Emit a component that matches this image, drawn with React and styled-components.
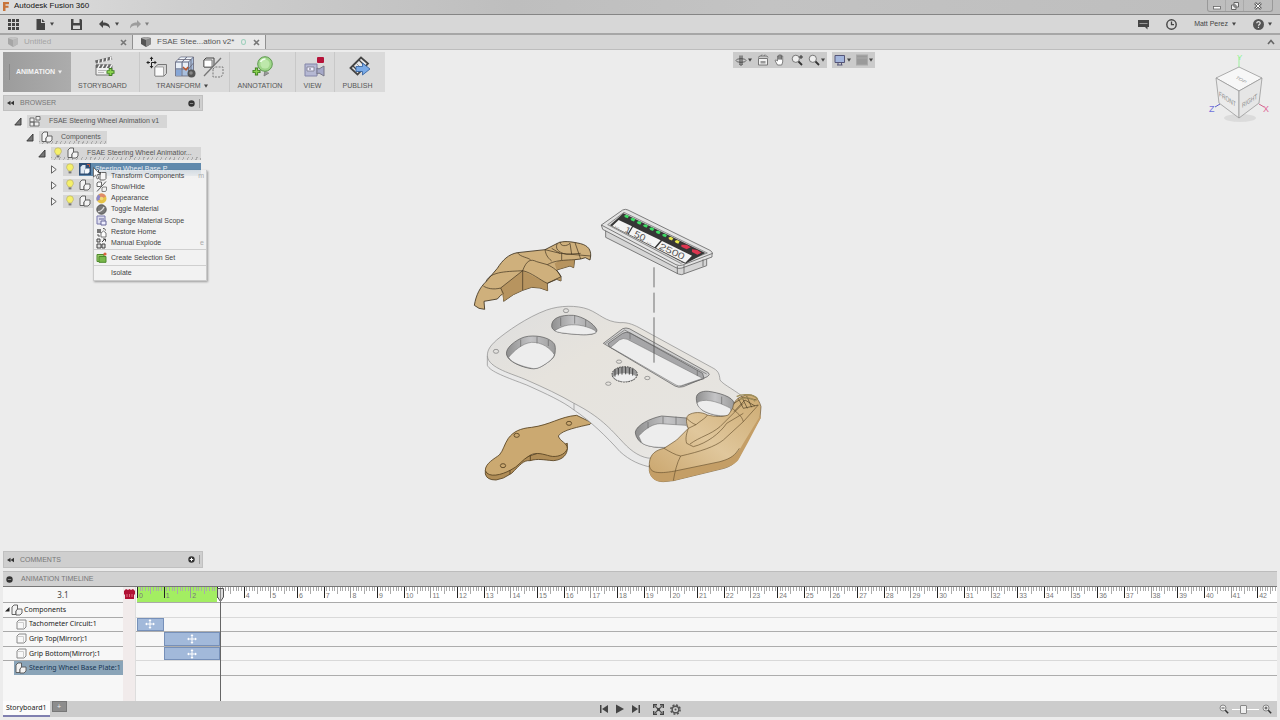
import React, { useState } from 'react';
import styled, { createGlobalStyle } from 'styled-components';

const GlobalStyle = createGlobalStyle`
  * {
    box-sizing: border-box;
  }
  body {
    margin: 0;
    background: #ececec;
    font-family: 'Liberation Sans', Arial, sans-serif;
    font-size: 7px;
    line-height: 10px;
    color: #444;
  }
  button,
  input {
    margin: 0;
    padding: 0;
    border: 0;
    background: none;
    font: inherit;
    color: inherit;
  }
  ul {
    margin: 0;
    padding: 0;
    list-style: none;
  }
  svg {
    display: block;
    flex: none;
  }
`;

const Page = styled.div`
  display: flex;
  flex-direction: column;
  min-height: 100vh;
`;

/* ---------- window chrome ---------- */

const TitleBar = styled.header`
  display: flex;
  align-items: center;
  height: 15px;
  padding: 0 7px 2px 2px;
  gap: 4px;
  background: linear-gradient(to right, #dedede, #cfcfcf 14%, #bebebe 40%, #c3c3c3 60%, #bdbdbd);
  border-bottom: 1px solid #858585;
`;

const AppTitle = styled.h1`
  margin: 0;
  flex: 1;
  font-size: 8px;
  font-weight: 400;
  color: #111;
`;

const WindowButtons = styled.div`
  display: flex;
  align-self: flex-start;
  height: 12px;
  border: 1px solid #999;
  border-top: 0;
  border-radius: 0 0 3px 3px;
`;

const WindowButton = styled.button`
  display: flex;
  align-items: center;
  justify-content: center;
  width: ${(props) => (props.$wide ? '28px' : '18px')};
  border-right: 1px solid #aaa;

  &:last-child {
    border-right: 0;
  }
`;

const QuickBar = styled.div`
  display: flex;
  align-items: center;
  height: 20px;
  padding: 0 8px;
  background: #d7d7d7;
  border-bottom: 2px solid #a6a6a6;
`;

const QuickGroup = styled.div`
  display: flex;
  align-items: center;
  gap: ${(props) => props.$gap};
  margin-left: ${(props) => (props.$end ? 'auto' : '0')};
`;

const IconButton = styled.button`
  display: flex;
  align-items: center;
  gap: ${(props) => (props.$tight ? '1px' : '4px')};
  opacity: ${(props) => (props.$faded ? 0.6 : 1)};
`;

const TabBar = styled.nav`
  display: flex;
  align-items: center;
  height: 15px;
  padding-right: 5px;
  background: #d5d5d5;
  border-bottom: 1px solid #bdbdbd;
`;

const DocTab = styled.div`
  display: flex;
  align-items: center;
  align-self: stretch;
  width: 133px;
  padding: 0 5px 0 7px;
  font-size: 8px;
  color: ${(props) => (props.$active ? '#555' : '#a5a5a5')};
  background: ${(props) => (props.$active ? '#e8e8e8' : '#d3d3d3')};
  border-right: 1px solid #909090;
`;

const DocName = styled.button`
  display: flex;
  align-items: center;
  gap: 5px;
  white-space: nowrap;
`;

const SyncRing = styled.span`
  width: 5px;
  height: 6px;
  margin-left: 7px;
  border: 1px solid #9fd0bd;
  border-radius: 50%;
`;

const CloseButton = styled.button`
  margin-left: auto;
`;

/* ---------- workspace ---------- */

const Workspace = styled.main`
  position: relative;
  display: flex;
  flex: 1;
  flex-direction: column;
  padding: 2px 3px 3px;
  background: #ececec;
`;

const ModelView = styled.svg`
  position: absolute;
  inset: 0;
  width: 100%;
  height: 100%;
`;

const TopRow = styled.div`
  position: relative;
  display: flex;
  align-items: flex-start;
  height: 43px;
`;

const Ribbon = styled.div`
  display: flex;
  height: 40px;
`;

const WorkspaceButton = styled.button`
  display: flex;
  align-items: center;
  gap: 3px;
  width: 68px;
  padding-left: 6px;
  background: linear-gradient(to right, #9c9c9c, #acacac);
  color: #f4f4f4;
  font-weight: 700;

  &::before {
    content: '';
    width: 1px;
    height: 16px;
    margin-right: 3px;
    background: #888;
  }
`;

const RibbonGroup = styled.div`
  display: flex;
  flex-direction: column;
  align-items: center;
  width: ${(props) => props.$width};
  padding: 4px 6px 0 0;
  background: #dadada;
  border-right: 1px solid #c8c8c8;

  &:last-child {
    border-right: 0;
  }
`;

const RibbonIcons = styled.div`
  display: flex;
  gap: 6px;
  height: 25px;
  padding-left: 6px;
`;

const RibbonLabel = styled.button`
  display: flex;
  align-items: center;
  gap: 3px;
  padding-left: 1px;
  color: #555;
`;

const NavBar = styled.div`
  display: flex;
  gap: 5px;
  margin: 0 auto;
  padding-left: 14px;
`;

const NavGroup = styled.div`
  display: flex;
  align-items: center;
  gap: 5px;
  height: 16px;
  padding: 0 2px;
  background: #cbcbcb;
`;

const CubeArea = styled.div`
  padding: 2px 5px 0 0;
`;

const PanelHeader = styled.button`
  position: relative;
  display: flex;
  align-items: center;
  gap: 6px;
  width: 200px;
  height: ${(props) => (props.$tall ? '17px' : '16px')};
  padding: 0 2px 0 3px;
  background: #cfcfcf;
  border: 1px solid #c0c0c0;
  color: #777;
`;

const PanelTools = styled.span`
  display: flex;
  align-items: center;
  gap: 4px;
  margin-left: auto;

  &::after {
    content: '';
    width: 1px;
    height: 9px;
    background: #999;
  }
`;

const Tree = styled.ul`
  position: relative;
  padding-top: 2px;
`;

const TreeRow = styled.li`
  display: flex;
  align-items: center;
  height: 16px;
  padding-left: ${(props) => props.$depth * 12 + 11}px;
  gap: 5px;
`;

const hatch = 'repeating-linear-gradient(115deg, #aaa 0 1px, #d6d6d6 1px 4px) bottom / 100% 3px no-repeat, #d6d6d6';

const TreeBody = styled.span`
  display: flex;
  align-items: center;
  gap: 4px;
  height: 13px;
  width: ${(props) => props.$width};
  padding-left: 2px;
  background: ${(props) => (props.$hatched ? hatch : '#d6d6d6')};
  color: #555;
  white-space: nowrap;
`;

const TreeLabel = styled.span`
  display: flex;
  flex: 1;
  align-items: center;
  align-self: stretch;
  gap: 4px;
  padding-left: ${(props) => (props.$selected ? '0' : '4px')};
  overflow: hidden;
  background: ${(props) => (props.$selected ? '#6089ac' : 'none')};
  color: ${(props) => (props.$selected ? '#e8eef4' : 'inherit')};
`;

const Menu = styled.div`
  position: absolute;
  top: 120px;
  left: 93px;
  width: 114px;
  padding-bottom: 1px;
  background: linear-gradient(rgba(240, 240, 240, 0.8), #f2f2f2 10px);
  border: 1px solid #cacaca;
  border-top: 0;
  box-shadow: 1px 1px 2px rgba(0, 0, 0, 0.35);
`;

const MenuGroup = styled.div`
  display: grid;
  grid-auto-rows: 1fr;
  height: ${(props) => props.$height};
  border-top: ${(props) => (props.$first ? '0' : '1px solid #cfcfcf')};
`;

const MenuItem = styled.button`
  display: flex;
  align-items: center;
  gap: 4px;
  padding: 0 2px;
  color: #444;
  text-align: left;

  &:hover {
    background: #dfe7ef;
  }
`;

const MenuIcon = styled.span`
  width: 11px;
`;

const Shortcut = styled.span`
  margin-left: auto;
  color: #aaa;
`;

const Cursor = styled.svg`
  position: absolute;
  top: 117px;
  left: 93px;
`;

const Spacer = styled.div`
  flex: 1;
`;

/* ---------- timeline ---------- */

const Timeline = styled.section`
  margin: 0 3px;
  background: #f7f7f7;
`;

const TimelineTitle = styled.button`
  display: flex;
  align-items: center;
  gap: 8px;
  width: 100%;
  height: 16px;
  padding: 0 3px;
  background: #d1d1d1;
  border-top: 1px solid #bcbcbc;
  border-bottom: 1px solid #777;
  color: #777;
`;

const TimelineBody = styled.div`
  display: grid;
  grid-template-columns: 120px 13px 1fr;
  grid-template-rows: 16px 73px 25px;
  position: relative;
`;

const TimeReadout = styled.output`
  padding-top: 3px;
  border-bottom: 1px solid #aaa;
  text-align: center;
  font: 8px/10px 'Noto Sans', sans-serif;
`;

const KeyColumn = styled.div`
  grid-row: 1 / 4;
  grid-column: 2;
  padding: 1px;
  background: #f1ebeb;
  border-right: 1px solid #ddd;
`;

const NameList = styled.ul`
  display: grid;
  grid-template-rows: repeat(5, minmax(0, 1fr));
`;

const NameRow = styled.li`
  display: flex;
  align-items: stretch;
  padding-left: ${(props) => (props.$root ? '0' : '11px')};
  border-bottom: 1px solid ${(props) => (props.$selected ? 'transparent' : '#aaa')};
  font-family: 'Noto Sans', sans-serif;
  color: #222;
  white-space: nowrap;
`;

const NameCell = styled.span`
  display: flex;
  flex: 1;
  align-items: center;
  gap: ${(props) => (props.$root ? '1px' : '2px')};
  padding-left: ${(props) => (props.$selected ? '1px' : '2px')};
  background: ${(props) => (props.$selected ? '#8aa4b8' : 'none')};
  color: ${(props) => (props.$selected ? '#173553' : 'inherit')};
`;

const Ruler = styled.div`
  grid-row: 1;
  grid-column: 3;
  display: flex;
  margin-left: 1px;
  overflow: hidden;
  background: #fff;
  border-bottom: 1px solid #aaa;
`;

const Second = styled.div`
  position: relative;
  display: flex;
  flex: ${(props) => props.$share} 1 0;
  min-width: 0;
  background: ${(props) => (props.$played ? '#a3ee62' : '#fff')};
`;

const Tick = styled.i`
  flex: 1;
  height: ${(props) => props.$height};
  box-shadow: inset 1px 0 ${(props) => props.$color};
`;

const SecondLabel = styled.span`
  position: absolute;
  bottom: 2px;
  left: 2px;
  color: #777;
  line-height: 8px;
`;

const Tracks = styled.div`
  grid-row: 2;
  grid-column: 3;
  display: grid;
  grid-template-rows: repeat(5, minmax(0, 1fr));
`;

const Track = styled.div`
  display: flex;
  padding-left: 1px;
  border-bottom: 1px solid ${(props) => (props.$soft ? '#d9d9d9' : '#adadad')};
`;

const Gap = styled.div`
  flex: ${(props) => props.$share} 1 0;
`;

const Clip = styled.div`
  display: flex;
  align-items: center;
  justify-content: center;
  flex: ${(props) => props.$share} 1 0;
  min-width: 0;
  background: #a2b9da;
  box-shadow: inset 0 0 0 1px #7690b9;
`;

const PlayheadLayer = styled.div`
  position: absolute;
  top: 1px;
  bottom: 0;
  left: 134px;
  right: 0;
  display: flex;
  pointer-events: none;
`;

const Playhead = styled.div`
  width: 7px;
  margin: 0 -4px 0 -3px;

  &::after {
    content: '';
    display: block;
    width: 1px;
    height: 99px;
    margin-left: 3px;
    background: #666;
  }
`;

const BottomBar = styled.footer`
  display: grid;
  grid-template-columns: 1fr auto 1fr;
  align-items: center;
  height: 16px;
  margin: 0 3px 3px;
  background: #cccccc;
`;

const StoryTabs = styled.div`
  display: flex;
  align-self: stretch;
  gap: 2px;
`;

const StoryTab = styled.button`
  padding: 0 3px;
  background: #fbfbfb;
  border-bottom: 2px solid #8080b0;
  font-family: 'Noto Sans', sans-serif;
  color: #222;
`;

const AddTab = styled.button`
  width: 15px;
  height: 11px;
  background: #8d8d8d;
  border: 1px solid #777;
  color: #eee;
  line-height: 8px;
`;

const Playback = styled.div`
  display: flex;
  gap: 6px;
`;

const ZoomTools = styled.div`
  display: flex;
  align-items: center;
  justify-content: flex-end;
  gap: 3px;
  padding-right: 5px;
`;

const ZoomSlider = styled.input`
  width: 27px;
  height: 12px;
  appearance: none;

  &::-webkit-slider-runnable-track {
    height: 1px;
    background: #fff;
  }
  &::-webkit-slider-thumb {
    appearance: none;
    width: 7px;
    height: 9px;
    margin-top: -4px;
    background: #eee;
    border: 1px solid #888;
    border-radius: 1px;
  }
`;

/* ---------- icons ---------- */

const Icon = ({ w = 12, h = 12, box, children, ...rest }) => (
  <svg width={w} height={h} viewBox={box || `0 0 ${w} ${h}`} fill="none" aria-hidden="true" {...rest}>
    {children}
  </svg>
);

const Caret = ({ color = '#444' }) => (
  <Icon w={4} h={4}>
    <path d="M0 .5h4L2 3.8z" fill={color} />
  </Icon>
);

const Close = () => (
  <Icon w={7} h={7}>
    <path d="M1 1l5 5M6 1L1 6" stroke="#777" strokeWidth="1.6" />
  </Icon>
);

const DocCube = ({ faded }) => (
  <Icon w={12} h={12} opacity={faded ? 0.35 : 1}>
    <path d="M1 2l5-1 5 1v6l-5 3-5-3z" fill="#555" />
    <path d="M6 4l5-2v6l-5 3z" fill="#888" />
    <path d="M1 2l5-1 5 1-5 2z" fill="#aaa" />
  </Icon>
);

const Rewind = () => (
  <Icon w={7} h={6}>
    <path d="M3.5 .8v4.4L0 3zM7 .8v4.4L3.5 3z" fill="#333" />
  </Icon>
);

const Dot = ({ plus }) => (
  <Icon w={7} h={7}>
    <circle cx="3.5" cy="3.5" r="3.2" fill="#333" />
    <path d={plus ? 'M1.8 3.5h3.4M3.5 1.8v3.4' : 'M1.8 3.5h3.4'} stroke={plus ? '#fff' : '#888'} />
  </Icon>
);

const Bulb = () => (
  <Icon w={10} h={12}>
    <path d="M5 .8a3.4 3.4 0 0 1 3.4 3.4C8.400 6 6.800 6.500 6.700 8H3.300C3.200 6.500 1.600 6 1.600 4.200A3.400 3.400 0 0 1 5 .8z" fill="#f5f06a" stroke="#b9b06a" strokeWidth=".7" />
    <path d="M3.600 8.400h2.800v2H3.600z" fill="#777" />
  </Icon>
);

const Parts = ({ tint = '#f4f4f4' }) => (
  <Icon w={12} h={12}>
    <path d="M1 3l2-2h3.500v5L5 7.500v3H1z" fill={tint} stroke="#555" strokeWidth=".9" />
    <path d="M5 7l1.500-2H11v4l-2 2H5z" fill={tint} stroke="#555" strokeWidth=".9" />
  </Icon>
);

const ActivePart = () => (
  <Icon w={12} h={12}>
    <path d="M0 0h12v12H0z" fill="#2f4f74" />
    <path d="M1.500 4l2-2h3v4l-1.500 1.500v3H1.500z" fill="#dfe8f2" />
    <path d="M5.500 7L7 5.500h3.500v3.500l-1.500 1.500H5.500z" fill="#f6f9fc" />
    <path d="M8 1.500h2.500V4" stroke="#c0563c" />
  </Icon>
);

const Box = () => (
  <Icon w={11} h={11}>
    <path d="M1 3l2-2h7v7l-2 2H1z" fill="#f8f8f8" stroke="#888" />
    <path d="M1.500 3.500h6v6" stroke="#ccc" />
  </Icon>
);

const Assembly = () => (
  <Icon w={12} h={12}>
    <path d="M1 3h4v4H1zM1 7h4v4H1zM5 7h5v4H5zM7 1.500h4V5H7z" fill="#eee" stroke="#666" strokeWidth=".9" />
  </Icon>
);

const Expander = ({ open }) => (
  <Icon w={8} h={9}>
    {open ? (
      <path d="M7 1v7H.8z" fill="#777" stroke="#333" strokeWidth=".9" />
    ) : (
      <path d="M1.500 .8v7.400l4.700-3.700z" fill="#f4f4f4" stroke="#555" strokeWidth=".9" />
    )}
  </Icon>
);

const Move = ({ size = 10, color = '#fff' }) => (
  <Icon w={size} h={size} box="0 0 10 10">
    <path d="M5 1v8M1 5h8" stroke={color} />
    <path d="M3.500 2L5 0l1.500 2zM3.500 8L5 10l1.500-2zM2 3.500L0 5l2 1.500zM8 3.500L10 5 8 6.500z" fill={color} />
  </Icon>
);

const StoryboardIcon = () => (
  <Icon w={22} h={22}>
    <path d="M2 9h16v10H2z" fill="#f0f0f0" stroke="#777" />
    <path d="M2 8.500h16v3.500H2z" fill="#666" />
    <path d="M4 12l2-3.500M8 12l2-3.500M12 12l2-3.500M16 12l2-3.500" stroke="#f4f4f4" strokeWidth="1.500" />
    <path d="M1 4.500L17.500 .5l.8 3L2 7.500z" fill="#666" />
    <path d="M4.500 7l.5-3.500M8.500 6L9 2.500M12.500 5l.5-3.500M16.500 4l.3-3" stroke="#f4f4f4" strokeWidth="1.500" />
    <path d="M4 14.500h8M4 16.500h6" stroke="#bbb" />
    <path d="M16.500 12v8M12.500 16h8" stroke="#3e7e22" strokeWidth="3.600" />
    <path d="M16.500 13v6M13.500 16h6" stroke="#8ad14f" strokeWidth="1.800" />
  </Icon>
);

const TransformIcon = () => (
  <Icon w={22} h={22}>
    <path d="M9 11l3-2.500h8.500v9L18 20H9z" fill="#d5d5d5" stroke="#777" />
    <path d="M9 11h8.500v9H9z" fill="#fafafa" stroke="#888" strokeWidth=".7" />
    <path d="M5.500 2v9M1 6.500h9" stroke="#222" strokeDasharray="3 1.500 4" />
    <path d="M3.700 3l1.800-2.400L7.300 3zM3.700 10l1.800 2.400L7.300 10zM2.500 4.700L.2 6.500l2.300 1.800zM8.500 4.700l2.300 1.800-2.300 1.800z" fill="#222" />
  </Icon>
);

const ExplodeIcon = () => (
  <Icon w={22} h={22}>
    <path d="M1.500 6l5-5h13v13l-5 6h-13z" fill="#a9bfdd" stroke="#667" strokeWidth=".8" />
    <path d="M2 6.500h5.500V12H2zM9 6.500h5V12H9z" fill="#e9eff7" />
    <path d="M2.500 5.500l4.200-4h5l-4 4zM9 5.500l4-4h5.500l-4 4z" fill="#f4f6fa" />
    <path d="M2 14h5.500v5.500H2z" fill="#86a6d6" />
    <path d="M1.500 6h13v14M14.500 6l5-5M8 6v14M1.500 13h13M8 6l5-5M14.500 13l5-6M4 3.500h13v13" stroke="#667" strokeWidth=".8" />
    <path d="M9 11l3 3 2-3" stroke="#c0562a" strokeWidth="1.400" />
    <circle cx="17.500" cy="17.500" r="4" fill="#555" />
    <circle cx="17" cy="17" r="1.800" fill="#888" />
  </Icon>
);

const ShowHideIcon = ({ size = 22 }) => (
  <Icon w={size} h={size} box="0 0 22 22">
    <path d="M2 4l2-2h8v7l-2 2H2z" fill="#ddd" stroke="#444" />
    <path d="M2 4h8v7H2z" fill="#fff" stroke="#555" strokeWidth=".8" />
    <path d="M19 2L2 20" stroke="#777" strokeWidth="1.300" />
    <path d="M11 13l2-2h8v7l-2 3h-8z" stroke="#777" strokeDasharray="2 1.200" />
  </Icon>
);

const AnnotationIcon = () => (
  <Icon w={22} h={22}>
    <path d="M13 14l-1 6 5-3" fill="#999" stroke="#777" strokeWidth=".8" />
    <circle cx="13" cy="8" r="7.300" fill="#9fd68a" stroke="#5f9a50" />
    <circle cx="13" cy="8" r="4.600" fill="#bde8ab" />
    <path d="M8.500 6a5 5 0 0 1 5-3" stroke="#f2fff0" strokeWidth="1.600" />
    <path d="M4.500 11.500v8M.5 15.500h8" stroke="#3e7e22" strokeWidth="3.200" />
    <path d="M4.500 12.500v6M1.500 15.500h6" stroke="#8ad14f" strokeWidth="1.400" />
  </Icon>
);

const ViewIcon = () => (
  <Icon w={22} h={22}>
    <path d="M1 8h12v12H1z" fill="#b5b8d3" stroke="#8385a8" />
    <path d="M3 11h7v4H3z" fill="#eef" stroke="#889" />
    <path d="M6 12v2" stroke="#667" />
    <path d="M13 12l2 1 5-3v10l-5-3-2 1z" fill="#a5a8c8" stroke="#778" />
    <rect x="13" y="1" width="7" height="6" rx="1" fill="#b6133a" />
  </Icon>
);

const PublishIcon = () => (
  <Icon w={22} h={22}>
    <path d="M1.500 12L12 1.500l7 6-10.500 11z" fill="#e8e8e8" stroke="#444" strokeWidth="1.800" />
    <path d="M4 10l6 6M10 4l6 6" stroke="#444" strokeWidth="1.300" />
    <path d="M7 7l6 6" stroke="#999" />
    <path d="M7 10.500h6.500V7l7.500 6-7.500 6v-3.500H7z" fill="#7aaae6" stroke="#2f5d9c" strokeWidth=".8" />
  </Icon>
);

const ViewCube = () => (
  <Icon w={64} h={72} role="img">
    <ellipse cx="32" cy="64" rx="16" ry="4" fill="#d4d4d4" opacity=".7" />
    <path d="M31 14V3" stroke="#9df09d" />
    <text x="29" y="6" fontSize="8" fill="#8df58d">Y</text>
    <path d="M12 50l-5 3" stroke="#5d5dc8" />
    <path d="M51 50l5 3" stroke="#d0648c" />
    <text x="1" y="58" fontSize="9" fill="#7070dc">Z</text>
    <text x="55" y="58" fontSize="9" fill="#e06a98">X</text>
    <path d="M8 24l23-11 23 11-23 13z" fill="#f7f7f7" stroke="#999" strokeWidth=".8" />
    <path d="M8 24l23 13v27L11 49z" fill="#ebebeb" stroke="#999" strokeWidth=".8" />
    <path d="M54 24L31 37v27l20-15z" fill="#e6e6e6" stroke="#999" strokeWidth=".8" />
    <text fontSize="6" fill="#999" transform="matrix(.8 .45 -.6 .5 27 24)">TOP</text>
    <text fontSize="7" fill="#888" transform="matrix(.7 .45 0 1 11 42)">FRONT</text>
    <text fontSize="7" fill="#888" transform="matrix(.7 -.45 0 1 34 54)">RIGHT</text>
  </Icon>
);

const Magnifier = ({ mark, size = 12 }) => (
  <Icon w={size} h={size} box="0 0 12 12">
    <circle cx="4.800" cy="4.800" r="3.600" fill="#eee" stroke="#777" />
    <path d="M7.500 7.500l3.500 3.500" stroke="#333" strokeWidth="1.800" />
    {mark && <path d={mark} stroke="#333" />}
  </Icon>
);

const navIcons = {
  orbit: (
    <Icon w={12} h={12}>
      <ellipse cx="6" cy="6.500" rx="5" ry="1.800" stroke="#666" />
      <path d="M5 1.500v9M7 1.500v9M4.500 10l1.500 1.500L7.500 10" stroke="#333" strokeWidth=".9" />
    </Icon>
  ),
  look: (
    <Icon w={12} h={12}>
      <path d="M1.500 4.500h9V11h-9z" fill="#f1f1f1" stroke="#777" />
      <path d="M3.500 7h5v2.500h-5z" fill="#999" />
      <path d="M1 3.500l2-1.500h7l1 1.500M4 2l1-1.500M7 2l1-1.500" stroke="#777" />
    </Icon>
  ),
  pan: (
    <Icon w={12} h={12}>
      <path d="M3.500 11L1 6.500l1-.6L3.500 7V2h1.300v3.500V1h1.300v4.500V1h1.300v4.500V2h1.300v6l-1 3z" fill="#fff" stroke="#555" strokeWidth=".7" />
    </Icon>
  ),
  display: (
    <Icon w={12} h={12}>
      <path d="M1 1.500h9.500v7H1z" fill="#a3b5dc" stroke="#557" />
      <path d="M3 11h5.500M4 9v2M7.500 9v2" stroke="#557" />
    </Icon>
  ),
  grid: (
    <Icon w={12} h={12}>
      <rect x=".5" y="1" width="11" height="10" fill="#9a9a9a" stroke="#aaa" />
      <path d="M1 4h10" stroke="#aaa" />
    </Icon>
  ),
};

const menuIcons = {
  move: (
    <Icon w={11} h={11}>
      <path d="M4 4l1.500-1.500H10v6L8.500 10H4z" fill="#f6f6f6" stroke="#666" />
      <path d="M2.500 0v5M0 2.500h5" stroke="#444" />
    </Icon>
  ),
  hide: (
    <Icon w={11} h={11}>
      <path d="M1 2l1-1h3.500v3l-1 1.500H1z" fill="#fff" stroke="#555" strokeWidth=".9" />
      <path d="M10 .5L1 10.500" stroke="#555" />
      <path d="M6 7l1-1h3.500v3l-1 1.500H6z" stroke="#777" strokeWidth=".9" />
    </Icon>
  ),
  appearance: (
    <Icon w={11} h={11}>
      <circle cx="5.500" cy="5.500" r="5" fill="#e6c347" />
      <path d="M5.500 5.500L1 8A5 5 0 0 1 3 1.200z" fill="#8b86c9" />
      <path d="M5.500 5.500L3 1.200A5 5 0 0 1 10 3.500z" fill="#e08a6a" />
      <circle cx="5.500" cy="5.500" r="1.800" fill="#f2d878" />
    </Icon>
  ),
  material: (
    <Icon w={11} h={11}>
      <circle cx="5.500" cy="5.500" r="4.700" fill="#777" stroke="#555" />
      <path d="M2 7.500c2 .5 5-1.500 6-4.500" stroke="#ddd" strokeWidth="1.300" />
    </Icon>
  ),
  scope: (
    <Icon w={11} h={11}>
      <path d="M1 1h8v8H1z" fill="#dde" stroke="#77a" />
      <path d="M3 4h5M5 6h5v4H5z" stroke="#669" fill="#eef" />
    </Icon>
  ),
  home: (
    <Icon w={11} h={11}>
      <path d="M1 2h4v4H1z" fill="#777" />
      <path d="M5 6l2.500-2L10 6v4H5z" fill="#fff" stroke="#555" strokeWidth=".8" />
      <path d="M7 1.500c2 0 2.500 1 2.500 2M2 7v2h2" stroke="#555" />
    </Icon>
  ),
  explode: (
    <Icon w={11} h={11}>
      <path d="M1 1h3v3H1zM1 6h4v4H1zM6 6h3v4H6z" fill="#ddd" stroke="#444" />
      <path d="M6 4l3-3M7 1h2.500v2.500" stroke="#444" />
    </Icon>
  ),
  set: (
    <Icon w={11} h={11}>
      <path d="M1 2.500h7v7H1z" fill="#9ccc6a" stroke="#4e8a2c" />
      <path d="M3 4.500h7v5.800H3z" fill="#79b84a" stroke="#4e8a2c" />
      <circle cx="9" cy="2" r="1.600" fill="#d8623c" />
    </Icon>
  ),
};

/* ---------- model ---------- */

const wood = '#cfb07c';
const woodDark = '#b08d57';

const leds = ['#3ddc63', '#3ddc63', '#3ddc63', '#3ddc63', '#3ddc63', '#3ddc63', '#3ddc63', '#e6e84a', '#e6e84a'];

// Units here are a third of a pixel at the default window size.
const Model = () => (
  <ModelView viewBox="-1380 -450 3840 1563" fill="none" strokeLinejoin="round" role="img" aria-label="Exploded steering wheel">
    <defs>
      <linearGradient id="plate" x1="0" y1="0" x2="1" y2="1">
        <stop offset="0" stopColor="#dedede" />
        <stop offset=".35" stopColor="#e6e3dd" />
        <stop offset=".75" stopColor="#e6e4e0" />
        <stop offset="1" stopColor="#efefef" />
      </linearGradient>
      <linearGradient id="grip" x1="0" y1="1" x2="1" y2="0">
        <stop offset="0" stopColor="#c9a46b" />
        <stop offset=".5" stopColor="#e0c79c" />
        <stop offset="1" stopColor="#cdab72" />
      </linearGradient>
      <linearGradient id="wall" x1="0" y1="0" x2="1" y2="0">
        <stop offset="0" stopColor="#8f8f8f" />
        <stop offset=".5" stopColor="#c4c4c6" />
        <stop offset="1" stopColor="#9c9c9c" />
      </linearGradient>
    </defs>

    {/* upper grip */}
    <g stroke="#3b2f1c" strokeWidth="2.500">
      <path d="M43 316C48 285 60 262 78 245L112 205C128 180 145 163 172 158L255 149L292 130C310 121 335 125 362 131C385 137 393 150 392 168L390 180L376 173L362 177L344 179L341 203L330 198L290 210L303 230V243L290 238L262 250L263 272L240 264L215 262L188 271L160 284L131 304L130 281L122 286L112 297L72 304L74 328L57 325Z" fill={wood} />
      <path d="M131 304L122 264L188 212L262 250L263 272L240 264L215 262L188 271L160 284ZM290 210L284 190L300 181L344 179L341 203L330 198ZM262 250L303 230V243L290 238Z" fill={woodDark} stroke="none" opacity=".8" />
      <path d="M78 245C90 212 150 215 188 212C200 180 212 176 230 185L262 194C280 202 296 214 303 230L262 250C240 240 215 218 188 212L122 264C100 270 80 265 70 258M188 212V271M122 264L130 281M262 194C280 185 290 181 344 179M172 158C182 172 205 172 212 180M255 149C258 165 262 172 275 183M255 149L300 160L392 168M292 130C285 145 292 157 320 163L362 160M300 125C300 140 320 140 330 130M330 130L335 163M305 160V180M345 128L362 177M275 145L300 160" strokeWidth="2" />
    </g>

    {/* tachometer */}
    <g stroke="#666" strokeWidth="2.500">
      <path d="M437 90V112L655 222L665 224L740 197V175Z" fill="#d5d5d5" />
      <path d="M424 75L488 30Q496 26 504 30L752 152Q760 158 756 166L756 171L666 204Q656 207 648 203L428 88Z" fill="#e3e3e3" />
      <path d="M424 75L648 194Q658 199 668 195L758 160" />
      <path d="M652 198V222M672 195V221M729 178V199" />
      <path d="M443 74L492 37L742 159L662 190Z" fill="#d4d4d4" strokeWidth="2" />
      <path d="M450 76L490 40L736 159L676 191Z" fill="#363636" stroke="none" />
      <path d="M457 78L476 60L516 79L503 101ZM519 81L602 121L584 142L506 103ZM606 123L696 167L676 188L588 144Z" fill="#f4f4f4" stroke="none" />
    </g>
    <g>
      {leds.map((color, i) => (
        <path key={i} d="M-7 -3l7-3 8 4-4 7-8-3z" fill={color} transform={`translate(${499 + i * 19} ${50 + i * 9.5})`} />
      ))}
      <path d="M664 134l16 0 12 8-12 6-16-8zM696 148l16 2 12 8-12 6-16-8z" fill="#dd3550" />
    </g>
    <g fill="#555" fontFamily="Liberation Sans" fontStyle="italic">
      <text fontSize="28" transform="matrix(.9 .44 -.2 .9 494 95)">1</text>
      <text fontSize="30" transform="matrix(.95 .46 -.2 .9 521 109)">50</text>
      <text fontSize="30" transform="matrix(1.1 .52 -.2 .9 597 146)">2500</text>
      <text fontSize="20" transform="matrix(.9 .44 -.2 .9 464 79)">...</text>
      <text fontSize="20" transform="matrix(.9 .44 -.2 .9 560 127)">...</text>
    </g>

    <g transform="translate(0 300)">
      {/* lower grip */}
      <g stroke="#54401f" strokeWidth="2.500">
        <path d="M76 512V522Q80 540 108 540L130 534L155 520C180 495 190 480 210 482C235 475 250 480 280 482C310 480 322 462 322 445V430Z" fill={woodDark} />
        <path d="M76 512C75 490 105 475 118 465C130 452 133 432 145 415C160 395 180 385 215 382C270 375 300 350 350 346L395 368L390 373C360 380 305 390 295 408C300 425 322 428 322 446C315 465 290 473 270 468C250 463 230 455 210 466C185 480 175 500 152 510C125 525 85 535 76 512Z" fill="#cba971" />
        <path d="M150 510V522M211 466V482" />
        <ellipse cx="170" cy="406" rx="8" ry="6" />
        <ellipse cx="327" cy="370" rx="8" ry="6" />
        <ellipse cx="129" cy="497" rx="8" ry="6" />
      </g>

      {/* base plate */}
      <g stroke="#888" strokeWidth="2">
        <path d="M82 168V196C90 215 140 232 200 255C260 282 310 305 342 330C390 362 440 410 480 455C510 482 540 495 575 502V440L300 200Z" fill="#e9e9e9" />
        <path d="M82 168C82 150 90 138 110 120C140 95 200 52 260 30C300 16 350 15 385 28C420 42 435 65 480 68C505 66 525 76 545 87L755 202C775 212 778 220 780 240C790 255 830 272 860 300L800 420L575 475C545 475 515 455 490 428C450 385 420 350 342 310C300 285 250 262 200 240C160 222 85 205 82 168Z" fill="url(#plate)" />
        <path d="M342 310V330" />
      </g>
      <g fill="url(#wall)" stroke="#555" strokeWidth="2">
        <path d="M275 80C273 55 300 44 340 46C370 50 400 70 410 88C415 102 390 107 350 103C310 100 278 98 275 80Z" />
        <path d="M140 165C136 150 150 135 170 122C185 112 200 108 218 108C250 108 270 118 280 128C288 135 286 150 285 160C283 172 275 180 262 188C245 200 230 208 215 206C185 202 145 185 140 165Z" />
        <path d="M709 295C708 280 725 272 745 274C775 278 820 290 822 310L820 345C790 355 760 345 735 335C715 325 709 310 709 295Z" />
        <path d="M526 396C530 375 570 355 605 348L680 354L720 400L640 442C600 445 560 442 540 425C530 415 526 405 526 396Z" />
        <path d="M430 130L488 86Q498 82 508 86L745 218Q752 224 742 230L670 260Q655 264 645 258Z" fill="#d0d0d0" />
        <path d="M444 131L488 100Q498 94 510 99L728 220L732 236L662 258L448 140Z" fill="#a6a6a8" />
      </g>
      <g fill="#ededed" stroke="#666" strokeWidth="1.500">
        <path d="M284 92C310 75 335 70 370 78C395 85 410 92 408 98C395 105 365 105 345 103C315 100 290 98 284 92Z" />
        <path d="M146 172C160 155 185 130 215 127C245 126 272 145 283 164C280 176 265 186 255 193C240 203 228 208 215 205C190 200 155 190 146 172Z" />
        <path d="M711 308C730 295 765 300 812 325L815 347C785 350 755 345 735 335C720 328 713 318 711 308Z" />
        <path d="M536 408C560 382 580 372 600 371L678 376L700 400L640 441C600 444 560 442 545 428Z" />
        <path d="M452 142L478 120Q490 112 502 118L728 235L664 257Q655 259 648 255Z" />
      </g>
      <path d="M302 52V78M344 46V71M377 60V80M182 118V140M231 109V130M265 120V138M785 290V312M609 350V371M648 350V374M564 366V385M510 99V118M712 212V228M436 131L494 90L740 222" stroke="#666" strokeWidth="2" />
      <g stroke="#777" strokeWidth="2">
        <ellipse cx="318" cy="32" rx="8" ry="6" />
        <ellipse cx="108" cy="154" rx="8" ry="6" />
        <ellipse cx="477" cy="185" rx="8" ry="5" />
        <ellipse cx="445" cy="251" rx="8" ry="5" />
        <ellipse cx="562" cy="234" rx="8" ry="5" />
      </g>
      <ellipse cx="494" cy="223" rx="38" ry="23" fill="#9a9a9a" stroke="#444" strokeWidth="3" strokeDasharray="5 3" />
      <path d="M460 230C470 218 515 216 528 229C520 248 474 250 460 230Z" fill="#efefef" />
      <path d="M465 208V230M475 203V226M486 201V224M497 201V223M508 203V224M518 207V227" stroke="#333" strokeWidth="2.500" />

      {/* mounted grip */}
      <g stroke="#6a5330" strokeWidth="2">
        <path d="M568 490V512C572 535 590 545 610 545L640 542L780 508C810 502 825 490 835 475L865 415L900 355L903 320C895 292 880 282 860 285C835 290 822 300 818 325L805 345C785 352 765 350 742 345C725 335 700 335 684 346C676 355 680 375 685 385L650 420L612 445C590 450 570 460 568 490Z" fill="url(#grip)" />
        <path d="M568 495C570 518 590 523 645 513L780 485C800 480 830 470 850 430L902 345V355L865 425L835 480C825 492 810 500 780 508L640 542L610 545C580 545 570 530 568 512Z" fill="#c49e66" stroke="none" />
        <path d="M568 495C570 518 590 523 645 513L780 485C815 475 825 465 838 445" />
        <path d="M612 445C630 455 645 465 662 468C650 490 645 515 640 542M662 468C720 455 765 440 790 420L850 365L895 315M685 385L708 374C725 360 740 352 742 345M680 355C690 365 700 372 708 374M685 385C680 400 675 415 680 430L700 440C740 430 780 400 800 370L850 340M690 432C720 410 750 405 780 380L850 310M818 325C830 340 845 345 850 365" />
        <path d="M822 310L850 292L890 300M835 295L850 325L895 315M845 290L862 325M860 288L875 322M822 335L855 300L885 318" stroke="#4a3c22" />
        <path d="M830 290C845 280 885 282 893 298M838 300C850 290 878 292 885 304" stroke="#a08f5c" strokeWidth="4" />
      </g>
    </g>
    <path d="M582 202V262M582 278V338M582 352V488" stroke="#555" strokeWidth="2.500" />
  </ModelView>
);

/* ---------- data ---------- */

const duration = 42.75;
const currentTime = 3.1;

const seconds = Array.from({ length: Math.ceil(duration) }, (_, i) => ({
  value: i,
  share: Math.min(1, duration - i),
}));

const tracks = [
  { name: 'Components', root: true },
  { name: 'Tachometer Circuit:1', start: 0, length: 1 },
  { name: 'Grip Top(Mirror):1', start: 1, length: currentTime - 1 },
  { name: 'Grip Bottom(Mirror):1', start: 1, length: currentTime - 1 },
  { name: 'Steering Wheel Base Plate:1', selected: true },
];

const menuGroups = [
  {
    height: '79px',
    items: [
      { label: 'Transform Components', icon: 'move', shortcut: 'm' },
      { label: 'Show/Hide', icon: 'hide' },
      { label: 'Appearance', icon: 'appearance' },
      { label: 'Toggle Material', icon: 'material' },
      { label: 'Change Material Scope', icon: 'scope' },
      { label: 'Restore Home', icon: 'home' },
      { label: 'Manual Explode', icon: 'explode', shortcut: 'e' },
    ],
  },
  { height: '16px', items: [{ label: 'Create Selection Set', icon: 'set' }] },
  { height: '14px', items: [{ label: 'Isolate' }] },
];

const tickHeight = (i) => {
  if (i === 0) return '11px';
  return i === 5 ? '7px' : '4px';
};

const tickColor = (second, i) => {
  if (i > 0) return '#aaa';
  return second % 3 === 2 ? '#999' : '#222';
};

/* ---------- sections ---------- */

const Browser = () => (
  <Tree>
    <TreeRow $depth={0}>
      <Expander open />
      <TreeBody $width="140px">
        <Assembly />
        <TreeLabel>FSAE Steering Wheel Animation v1</TreeLabel>
      </TreeBody>
    </TreeRow>
    <TreeRow $depth={1}>
      <Expander open />
      <TreeBody $width="68px" $hatched>
        <Parts />
        <TreeLabel>Components</TreeLabel>
      </TreeBody>
    </TreeRow>
    <TreeRow $depth={2}>
      <Expander open />
      <TreeBody $width="150px" $hatched>
        <Bulb />
        <Parts />
        <TreeLabel>FSAE Steering Wheel Animatior...</TreeLabel>
      </TreeBody>
    </TreeRow>
    <TreeRow $depth={3}>
      <Expander />
      <TreeBody $width="138px">
        <Bulb />
        <TreeLabel $selected>
          <ActivePart />
          Steering Wheel Base P...
        </TreeLabel>
      </TreeBody>
    </TreeRow>
    {['Grip', 'Circuit'].map((key) => (
      <TreeRow key={key} $depth={3}>
        <Expander />
        <TreeBody $width="40px">
          <Bulb />
          <Parts />
        </TreeBody>
      </TreeRow>
    ))}
  </Tree>
);

const ContextMenu = () => (
  <Menu role="menu">
    {menuGroups.map((group, index) => (
      <MenuGroup key={index} $height={group.height} $first={index === 0}>
        {group.items.map((item) => (
          <MenuItem key={item.label} role="menuitem">
            <MenuIcon>{item.icon && menuIcons[item.icon]}</MenuIcon>
            {item.label}
            {item.shortcut && <Shortcut>{item.shortcut}</Shortcut>}
          </MenuItem>
        ))}
      </MenuGroup>
    ))}
  </Menu>
);

const AnimationTimeline = () => (
  <Timeline>
    <TimelineTitle>
      <Dot />
      ANIMATION TIMELINE
    </TimelineTitle>
    <TimelineBody>
      <TimeReadout>{currentTime}</TimeReadout>
      <KeyColumn>
        <Icon w={11} h={12}>
          <path d="M0 3l2-2 2 1 1.500-1L7 2l2-1 2 2v3l-1 1v4H1V7L0 6z" fill="#b01235" />
          <path d="M3 6v3M5.500 6v3M8 6v3" stroke="#dd6a80" />
        </Icon>
      </KeyColumn>
      <Ruler>
        {seconds.map(({ value, share }) => (
          <Second key={value} $share={share} $played={value < Math.floor(currentTime)}>
            {Array.from({ length: Math.round(share * 10) }, (_, i) => (
              <Tick key={i} $height={tickHeight(i)} $color={tickColor(value, i)} />
            ))}
            <SecondLabel>{value === 3 ? '' : value}</SecondLabel>
          </Second>
        ))}
      </Ruler>
      <NameList>
        {tracks.map((track) => (
          <NameRow key={track.name} $root={track.root} $selected={track.selected}>
            <NameCell $root={track.root} $selected={track.selected}>
              {track.root && (
                <Icon w={5} h={5}>
                  <path d="M4.500 0v4.500H0z" fill="#222" />
                </Icon>
              )}
              {track.root || track.selected ? <Parts /> : <Box />}
              {track.name}
            </NameCell>
          </NameRow>
        ))}
      </NameList>
      <Tracks>
        {tracks.map((track, index) => (
          <Track key={track.name} $soft={index % 3 === 0}>
            {track.length && (
              <>
                <Gap $share={track.start} />
                <Clip $share={track.length}>
                  <Move />
                </Clip>
                <Gap $share={duration - track.start - track.length} />
              </>
            )}
          </Track>
        ))}
      </Tracks>
      <PlayheadLayer>
        <Gap $share={currentTime} />
        <Playhead>
          <Icon w={7} h={14}>
            <path d="M.5 .5h6v8.500L3.500 13.500.5 9z" fill="#ddd" stroke="#555" />
            <path d="M3.500 1v12" stroke="#888" />
          </Icon>
        </Playhead>
        <Gap $share={duration - currentTime} />
      </PlayheadLayer>
    </TimelineBody>
  </Timeline>
);

const App = () => {
  const [zoom, setZoom] = useState(42);

  return (
    <Page>
      <GlobalStyle />
      <TitleBar>
        <Icon w={8} h={10}>
          <path d="M1 1h6v2.200H3.500v1.500h3v2H3.500V10H1z" fill="#c8743a" />
        </Icon>
        <AppTitle>Autodesk Fusion 360</AppTitle>
        <WindowButtons>
          <WindowButton aria-label="Minimize">
            <Icon w={8} h={8}>
              <rect x=".5" y="4.500" width="7" height="2.500" fill="#fff" stroke="#666" strokeWidth=".8" />
            </Icon>
          </WindowButton>
          <WindowButton aria-label="Restore">
            <Icon w={8} h={8}>
              <path d="M3 .5h4.500V5H3zM.5 3H5v4.500H.5z" fill="#eee" stroke="#666" />
            </Icon>
          </WindowButton>
          <WindowButton aria-label="Close" $wide>
            <Icon w={8} h={8}>
              <path d="M1 1l6 6M7 1L1 7" stroke="#666" strokeWidth="2.600" />
              <path d="M1.500 1.500l5 5M6.500 1.500l-5 5" stroke="#fff" />
            </Icon>
          </WindowButton>
        </WindowButtons>
      </TitleBar>

      <QuickBar>
        <QuickGroup $gap="10px">
          <QuickGroup $gap="17px">
            <IconButton aria-label="Data panel">
              <Icon w={11} h={11}>
                <path d="M0 0h3v3H0zM4 0h3v3H4zM8 0h3v3H8zM0 4h3v3H0zM4 4h3v3H4zM8 4h3v3H8zM0 8h3v3H0zM4 8h3v3H4zM8 8h3v3H8z" fill="#444" />
              </Icon>
            </IconButton>
            <IconButton aria-label="File">
              <Icon w={10} h={11}>
                <path d="M.5 0H5v4h4v7H.5zM6 0l3 3H6z" fill="#444" />
              </Icon>
              <Caret />
            </IconButton>
            <IconButton aria-label="Save">
              <Icon w={11} h={11}>
                <path d="M0 0h10l1 1v10H0z" fill="#444" />
                <path d="M2.500 0h6v4h-6zM2 6.500h7V10H2z" fill="#d7d7d7" />
              </Icon>
            </IconButton>
            <IconButton aria-label="Undo">
              <Icon w={12} h={9}>
                <path d="M4 0v2.500c4 0 7 1.500 7 6C9.500 6 7.500 5.500 4 5.500V8L0 4z" fill="#444" />
              </Icon>
              <Caret />
            </IconButton>
          </QuickGroup>
          <IconButton aria-label="Redo" $faded>
            <Icon w={12} h={9}>
              <path d="M8 0v2.500c-4 0-7 1.500-7 6C2.500 6 4.500 5.500 8 5.500V8l4-4z" fill="#777" />
            </Icon>
            <Caret />
          </IconButton>
        </QuickGroup>
        <QuickGroup $gap="17px" $end>
          <IconButton aria-label="Comments">
            <Icon w={11} h={11}>
              <path d="M0 1h11v7H9.500v2.500L7 8H0z" fill="#444" />
              <path d="M1.500 4.500h8" stroke="#999" />
            </Icon>
          </IconButton>
          <IconButton aria-label="Job status">
            <Icon w={11} h={11}>
              <circle cx="5.500" cy="5.500" r="4.700" stroke="#444" strokeWidth="1.400" />
              <path d="M5.500 2.500v3.200H8" stroke="#444" strokeWidth="1.300" />
            </Icon>
          </IconButton>
          <IconButton>
            Matt Perez
            <Caret />
          </IconButton>
          <IconButton aria-label="Help">
            <Icon w={11} h={11}>
              <circle cx="5.500" cy="5.500" r="5.500" fill="#555" />
              <path d="M3.800 4.300c0-2.300 3.400-2.300 3.400 0 0 1.200-1.700 1.200-1.700 2.500M5.500 7.800V9" stroke="#e4e4e4" strokeWidth="1.200" />
            </Icon>
            <Caret />
          </IconButton>
        </QuickGroup>
      </QuickBar>

      <TabBar>
        <DocTab>
          <DocName>
            <DocCube faded />
            Untitled
          </DocName>
          <CloseButton aria-label="Close Untitled">
            <Close />
          </CloseButton>
        </DocTab>
        <DocTab $active>
          <DocName>
            <DocCube />
            FSAE Stee...ation v2*
          </DocName>
          <SyncRing />
          <CloseButton aria-label="Close FSAE Steering Wheel">
            <Close />
          </CloseButton>
        </DocTab>
        <CloseButton aria-label="Collapse">
          <Icon w={8} h={6}>
            <path d="M1 5l3-3.500L7 5" stroke="#666" strokeWidth="1.600" />
          </Icon>
        </CloseButton>
      </TabBar>

      <Workspace>
        <Model />
        <TopRow>
          <Ribbon>
            <WorkspaceButton>
              ANIMATION
              <Caret color="#eee" />
            </WorkspaceButton>
            <RibbonGroup $width="69px">
              <RibbonIcons>
                <StoryboardIcon />
              </RibbonIcons>
              <RibbonLabel>STORYBOARD</RibbonLabel>
            </RibbonGroup>
            <RibbonGroup $width="90px">
              <RibbonIcons>
                <TransformIcon />
                <ExplodeIcon />
                <ShowHideIcon />
              </RibbonIcons>
              <RibbonLabel>
                TRANSFORM
                <Caret />
              </RibbonLabel>
            </RibbonGroup>
            <RibbonGroup $width="66px">
              <RibbonIcons>
                <AnnotationIcon />
              </RibbonIcons>
              <RibbonLabel>ANNOTATION</RibbonLabel>
            </RibbonGroup>
            <RibbonGroup $width="39px">
              <RibbonIcons>
                <ViewIcon />
              </RibbonIcons>
              <RibbonLabel>VIEW</RibbonLabel>
            </RibbonGroup>
            <RibbonGroup $width="50px">
              <RibbonIcons>
                <PublishIcon />
              </RibbonIcons>
              <RibbonLabel>PUBLISH</RibbonLabel>
            </RibbonGroup>
          </Ribbon>
          <NavBar>
            <NavGroup>
              <IconButton aria-label="Orbit" $tight>
                {navIcons.orbit}
                <Caret />
              </IconButton>
              <IconButton aria-label="Look at">{navIcons.look}</IconButton>
              <IconButton aria-label="Pan">{navIcons.pan}</IconButton>
              <IconButton aria-label="Zoom">
                <Magnifier mark="M10 1v4M8 3h4" />
              </IconButton>
              <IconButton aria-label="Fit" $tight>
                <Magnifier />
                <Caret />
              </IconButton>
            </NavGroup>
            <NavGroup>
              <IconButton aria-label="Display settings" $tight>
                {navIcons.display}
                <Caret />
              </IconButton>
              <IconButton aria-label="Grid settings" $tight>
                {navIcons.grid}
                <Caret />
              </IconButton>
            </NavGroup>
          </NavBar>
          <CubeArea>
            <ViewCube />
          </CubeArea>
        </TopRow>
        <PanelHeader>
          <Rewind />
          BROWSER
          <PanelTools>
            <Dot />
          </PanelTools>
        </PanelHeader>
        <Browser />
        <ContextMenu />
        <Cursor width="8" height="13" viewBox="0 0 8 13" aria-hidden="true">
          <path d="M.5 .5v9.500l2.200-2 1.600 4 1.600-.7-1.600-3.800h3z" fill="#fff" stroke="#555" strokeWidth=".8" />
        </Cursor>
        <Spacer />
        <PanelHeader $tall>
          <Rewind />
          COMMENTS
          <PanelTools>
            <Dot plus />
          </PanelTools>
        </PanelHeader>
      </Workspace>

      <AnimationTimeline />

      <BottomBar>
        <StoryTabs>
          <StoryTab>Storyboard1</StoryTab>
          <AddTab aria-label="Add storyboard">+</AddTab>
        </StoryTabs>
        <Playback>
          <IconButton aria-label="Go to start">
            <Icon w={10} h={10}>
              <path d="M1 1h1.500v8H1zM9 1v8L3 5z" fill="#444" />
            </Icon>
          </IconButton>
          <IconButton aria-label="Play">
            <Icon w={10} h={10}>
              <path d="M1 .5L9 5 1 9.500z" fill="#444" />
            </Icon>
          </IconButton>
          <IconButton aria-label="Go to end">
            <Icon w={10} h={10}>
              <path d="M7.500 1H9v8H7.500zM1 1v8l6-4z" fill="#444" />
            </Icon>
          </IconButton>
          <Spacer />
          <IconButton aria-label="Fit timeline">
            <Icon w={11} h={11}>
              <path d="M.7 4V.7H4M7 .7h3.300V4M10.300 7v3.300H7M4 10.300H.7V7" stroke="#444" strokeWidth="1.400" />
              <path d="M2 2l7 7M9 2L2 9" stroke="#555" strokeWidth="1.200" />
              <path d="M4 4h3v3H4z" fill="#444" />
            </Icon>
          </IconButton>
          <IconButton aria-label="Settings">
            <Icon w={11} h={11}>
              <circle cx="5.500" cy="5.500" r="4.600" stroke="#555" strokeWidth="1.600" strokeDasharray="2 1.610" />
              <circle cx="5.500" cy="5.500" r="3.300" stroke="#555" strokeWidth="1.400" />
              <circle cx="5.500" cy="5.500" r="1" fill="#555" />
            </Icon>
          </IconButton>
        </Playback>
        <ZoomTools>
          <IconButton aria-label="Zoom out">
            <Magnifier size={10} mark="M3 4.800h3.600" />
          </IconButton>
          <ZoomSlider
            type="range"
            aria-label="Timeline zoom"
            value={zoom}
            onChange={(e) => setZoom(Number(e.target.value))}
          />
          <IconButton aria-label="Zoom in">
            <Magnifier size={10} mark="M3 4.800h3.600M4.800 3v3.600" />
          </IconButton>
        </ZoomTools>
      </BottomBar>
    </Page>
  );
};

export default App;
